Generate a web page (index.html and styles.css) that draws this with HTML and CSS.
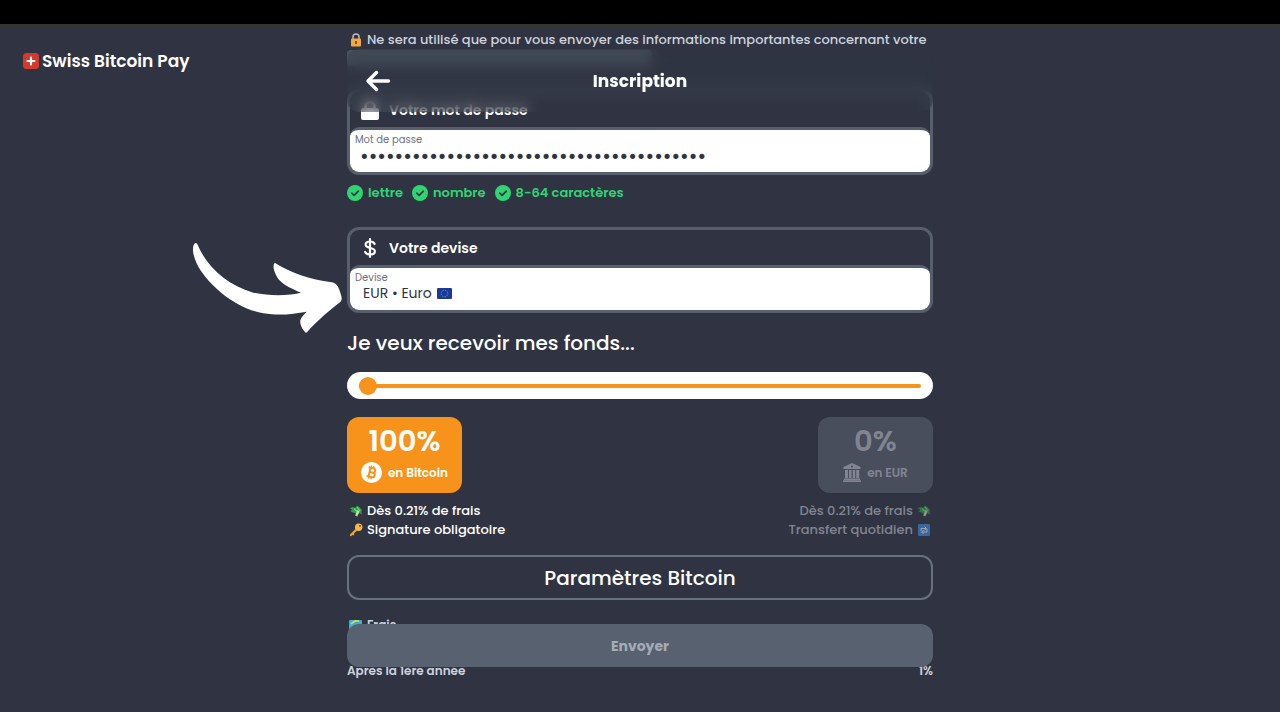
FILE: index.html
```html
<!DOCTYPE html>
<html lang="fr">
<head>
<meta charset="utf-8">
<meta name="viewport" content="width=device-width, initial-scale=1">
<title>Swiss Bitcoin Pay – Inscription</title>
<link rel="stylesheet" href="styles.css">
</head>
<body>
<svg class="defs" aria-hidden="true">
  <symbol id="check" viewBox="0 0 16 16"><circle cx="8" cy="8" r="8" fill="#2fd573"/><path d="M4.8 8.1l2.3 2.3 4.2-4.3" fill="none" stroke="#303542" stroke-width="1.7" stroke-linecap="round" stroke-linejoin="round"/></symbol>
  <symbol id="money" viewBox="0 0 14 14"><path d="M.5 4L4 3l2 1L8 1.500l2.500 1.800L13 6l-.8 2 1 2.500-3-1.500L8.500 11 5.500 9 1.500 7.500 3 5.800z" fill="#2fa04c"/><path d="M5 4.500l4 4M8 3l3 4" stroke="#85d36b" stroke-width="1.100"/><path d="M8.500 6l2 1.500-2.300 5-2-1z" fill="#cfdab5"/></symbol>
</svg>
<div class="strip"></div>
<div class="page">
  <a class="brand" href="#">
    <svg width="16" height="16" viewBox="0 0 16 16" aria-hidden="true"><rect width="16" height="16" rx="3.500" fill="#d5392d"/><path d="M8 4.500v7M4.500 8h7" stroke="#fff" stroke-width="2.200" stroke-linecap="round"/></svg>
    <span>Swiss Bitcoin Pay</span>
  </a>
  <main class="column">
    <header class="topbar">
      <button class="back" type="button" aria-label="Retour"><svg width="26" height="22" viewBox="0 0 26 22" fill="none" stroke="#fff" stroke-width="3.400" stroke-linecap="round" stroke-linejoin="round"><path d="M11.500 2.500L3 11l8.500 8.500M3 11h20.500"/></svg></button>
      <h1>Inscription</h1>
    </header>
    <p class="note pale">
      <svg width="14" height="14" viewBox="0 0 14 14" aria-hidden="true"><path d="M4 7V4a3 3 0 0 1 6 0v3" fill="none" stroke="#b8bcc5" stroke-width="1.500"/><rect x="2" y="5.500" width="10" height="8" rx="1" fill="#f5a63d"/><path d="M7 8v3" stroke="#66482a" stroke-width="1.700"/></svg>
      <span>Ne sera utilisé que pour vous envoyer des informations importantes concernant votre</span>
    </p>
    <div class="faded-line"></div>

    <section class="field password">
      <label class="field-title" for="pw">
        <svg width="20" height="20" viewBox="0 0 20 20" aria-hidden="true"><path d="M5.500 10V6.500a4.500 4.500 0 0 1 9 0V10" fill="none" stroke="#fff" stroke-width="2.500"/><rect x="1" y="8" width="18" height="12" rx="2" fill="#fff"/></svg>
        <span>Votre mot de passe</span>
      </label>
      <div class="control">
        <span class="hint">Mot de passe</span>
        <input id="pw" class="secret" type="password" value="aaaaaaaaaaaaaaaaaaaaaaaaaaaaaaaaaaaaaaaa">
      </div>
    </section>
    <ul class="rules">
      <li><svg width="16" height="16" aria-hidden="true"><use href="#check"/></svg>lettre</li>
      <li><svg width="16" height="16" aria-hidden="true"><use href="#check"/></svg>nombre</li>
      <li><svg width="16" height="16" aria-hidden="true"><use href="#check"/></svg>8-64 caractères</li>
    </ul>

    <section class="field currency">
      <label class="field-title" for="cur">
        <svg width="20" height="20" viewBox="0 0 20 20" fill="none" stroke="#fff" stroke-width="2.200" stroke-linecap="round" aria-hidden="true"><path d="M10 1.200v17.600M14.600 6c-.8-1.800-2.400-2.500-4.600-2.500-2.700 0-4.400 1.200-4.400 3.100 0 4.500 9.300 2.200 9.300 6.700 0 2-2 3.200-4.700 3.200-2.500 0-4.300-.8-5.100-2.600"/></svg>
        <span>Votre devise</span>
      </label>
      <div class="control">
        <span class="hint">Devise</span>
        <div class="choice">
          <select id="cur"><option>EUR • Euro</option></select>
          <svg width="15" height="11" viewBox="0 0 15 11" aria-hidden="true"><rect width="15" height="11" rx="1" fill="#173a9b"/><circle cx="7.500" cy="5.500" r="3.300" fill="none" stroke="#b5ad66" stroke-width=".9" stroke-dasharray=".8 .93"/></svg>
        </div>
      </div>
      <svg class="pointer" width="180" height="110" viewBox="0 0 540 330" aria-hidden="true"><path fill="#fff" d="M40 48C43 37 49 36 53 44C80 110 140 165 220 188C270 199 330 197 363 188C330 174 298 160 288 135C280 118 278 106 284 98C330 128 390 148 455 157C468 158 475 170 480 185C486 202 487 210 481 216C450 240 415 268 381 307Q376 311 373 304C361 288 356 272 366 261Q372 252 380 245C340 252 300 258 250 250C170 236 90 170 55 110C40 82 37 60 40 48Z"/></svg>
    </section>

    <h2><label for="share">Je veux recevoir mes fonds...</label></h2>
    <input id="share" class="slider" type="range" min="0" max="100" value="0">

    <div class="split">
      <div class="side">
        <div class="card bitcoin">
          <strong>100%</strong>
          <span class="card-label"><svg width="21" height="21" viewBox="0 0 21 21" aria-hidden="true"><circle cx="10.500" cy="10.500" r="10.500" fill="#fff"/><g transform="rotate(13 10.500 10.500)" fill="none" stroke="#f7931a" stroke-width="2"><path d="M6.500 6h5a2.200 2.200 0 0 1 0 4.400H8.500M8.500 10.400h3.500a2.300 2.300 0 0 1 0 4.600H6.500M8.500 6v9"/><path d="M9 3.800V6M11.500 3.800V6M9 15v2.200M11.500 15v2.200" stroke-width="1.400"/></g></svg>en Bitcoin</span>
        </div>
        <p class="note"><svg width="14" height="14" aria-hidden="true"><use href="#money"/></svg><span>Dès 0.21% de frais</span></p>
        <p class="note"><svg width="14" height="14" viewBox="0 0 14 14" aria-hidden="true"><path d="M8.500 5.500L2 12" stroke="#e8a13c" stroke-width="2.300" stroke-linecap="round"/><path d="M3.500 10.500l1.500 1.500" stroke="#e8a13c" stroke-width="1.500"/><circle cx="9.700" cy="4.300" r="3.700" fill="#f6b84b"/><circle cx="11" cy="3" r="1" fill="#6a513a"/></svg><span>Signature obligatoire</span></p>
      </div>
      <div class="side right">
        <div class="card bank">
          <strong>0%</strong>
          <span class="card-label"><svg width="18" height="19" viewBox="0 0 18 19" fill="currentColor" aria-hidden="true"><path d="M9 0l8.500 4v2H.5V4zM2 7h3v8H2zM6 7h2.500v8H6zM9.700 7h2.500v8H9.700zM13.200 7h3v8h-3zM1 15.500h16V17H1zM0 17.300h18V19H0z"/><circle cx="9" cy="3.600" r="1.100" fill="#484e5c"/></svg>en EUR</span>
        </div>
        <p class="note"><span>Dès 0.21% de frais</span><svg width="14" height="14" aria-hidden="true"><use href="#money"/></svg></p>
        <p class="note"><span>Transfert quotidien</span><svg width="14" height="14" viewBox="0 0 14 14" aria-hidden="true"><rect x="1" y="1" width="12" height="12" rx="1" fill="#438bd9"/><path d="M4 8V5.500h5M10 6v3H5M7.500 3.500l2 2-2 1.500M6.500 7.500l-2 1.500 2 2" fill="none" stroke="#e5f2ff"/></svg></p>
      </div>
    </div>

    <button class="settings" type="button">Paramètres Bitcoin</button>

    <section class="fees">
      <p class="note"><svg width="14" height="14" viewBox="0 0 14 14" aria-hidden="true"><rect y="2" width="13" height="10" rx="1" fill="#39afd1"/><path d="M2 6l4-3h4" fill="none" stroke="#c8d465" stroke-width="2"/></svg><span>Frais</span></p>
      <dl><dt>Après la 1ère année</dt><dd>1%</dd></dl>
    </section>
    <button class="submit" type="submit" disabled>Envoyer</button>
  </main>
</div>
</body>
</html>
```
FILE: styles.css
```css
* { box-sizing: border-box; }
body {
  margin: 0;
  height: 100vh;
  overflow: hidden;
  display: flex;
  flex-direction: column;
  background: #303442;
  color: #fff;
  font-family: Poppins, Inter, "Noto Sans", sans-serif;
  font-size: 13px;
  font-weight: 600;
  line-height: 20px;
}
h1, h2, p, ul, dl, dd { margin: 0; padding: 0; }
button, input, select { font: inherit; margin: 0; }
svg { flex: none; display: block; }
.defs { position: absolute; width: 0; height: 0; }
.strip { flex: none; height: 24px; background: #000; }
.page {
  flex: 1;
  min-height: 0;
  display: grid;
  grid-template-columns: 1fr minmax(0, 586px) 1fr;
  border-top: 4px solid #33352f;
}
.brand {
  display: flex;
  align-items: center;
  align-self: start;
  gap: 3px;
  padding: 21px 0 0 23px;
  color: #fff;
  font-size: 17px;
  line-height: 24px;
  text-decoration: none;
  white-space: nowrap;
}
.column { position: relative; padding-top: 2px; min-width: 0; }
.topbar {
  position: absolute;
  z-index: 2;
  top: 21px;
  left: 0;
  right: 0;
  height: 63px;
  display: grid;
  grid-template-columns: 44px 1fr 44px;
  align-items: center;
  padding: 0 18px;
  border-radius: 12px;
  background: rgba(48, 54, 67, 0.3);
  backdrop-filter: blur(7px);
}
.back { width: 26px; padding: 0; border: 0; background: none; cursor: pointer; }
h1 { font-size: 17px; font-weight: 700; line-height: 24px; text-align: center; }
.note { display: flex; align-items: center; gap: 4px; padding: 0 2px; line-height: 19px; white-space: nowrap; }
.pale { color: #ccd1dc; line-height: 20px; font-weight: 500; }
.faded-line { width: 52%; height: 16px; background: #4b5361; border-radius: 4px; }
.field { position: relative; border: 3px solid #575e6c; border-radius: 12px; }
.password { margin-top: 23px; }
.currency { margin-top: 24px; }
.field-title { display: flex; align-items: center; gap: 9px; height: 35px; padding: 0 10px; font-size: 14px; }
.control {
  height: 45px;
  border-top: 3px solid #575e6c;
  border-radius: 9px;
  background: #fff;
  color: #303442;
  padding: 3px 5px 0;
}
.hint { display: block; font-size: 10px; line-height: 14px; font-weight: 400; color: #6c717e; }
.secret {
  display: block;
  width: 100%;
  height: 18px;
  padding: 0 5px;
  border: 0;
  background: none;
  color: #303442;
  font-size: 21px;
  font-weight: 400;
  outline: 0;
}
.choice { display: flex; align-items: center; gap: 5px; padding: 0 8px; }
.choice select {
  appearance: none;
  field-sizing: content;
  height: 16px;
  border: 0;
  padding: 0;
  background: none;
  color: #303442;
  font-size: 14px;
  line-height: 16px;
  font-weight: 400;
}
.rules { display: flex; gap: 9px; margin-top: 8px; list-style: none; color: #2fd573; }
.rules li { display: flex; align-items: center; gap: 5px; }
.pointer { position: absolute; top: 0; right: calc(100% - 10px); pointer-events: none; }
h2 { margin-top: 15px; font-size: 20px; line-height: 30px; font-weight: 500; }
.slider {
  appearance: none;
  display: block;
  width: 100%;
  height: 27px;
  margin-top: 14px;
  padding: 0 12px;
  border-radius: 14px;
  background: #fff;
}
.slider::-webkit-slider-runnable-track { height: 4px; border-radius: 2px; background: #f7931a; }
.slider::-webkit-slider-thumb {
  appearance: none;
  width: 18px;
  height: 18px;
  margin-top: -7px;
  border-radius: 50%;
  background: #f7931a;
}
.split { display: flex; justify-content: space-between; margin-top: 18px; }
.side { display: flex; flex-direction: column; align-items: flex-start; }
.card {
  display: flex;
  flex-direction: column;
  align-items: center;
  gap: 5px;
  min-width: 115px;
  height: 76px;
  margin-bottom: 8px;
  padding: 8px 12px;
  border-radius: 12px;
}
.card strong { font-size: 29px; line-height: 32px; font-weight: 600; }
.card-label { display: flex; align-items: center; gap: 6px; font-size: 12px; line-height: 21px; white-space: nowrap; }
.bitcoin { background: #f7931a; }
.right { align-items: flex-end; color: #818591; }
.right .note svg { opacity: 0.6; }
.bank { background: #484e5c; }
.side .note { font-weight: 500; }
.settings {
  display: block;
  width: 100%;
  height: 45px;
  margin-top: 16px;
  border: 2px solid #697080;
  border-radius: 12px;
  background: none;
  color: #fff;
  font-size: 20px;
  font-weight: 500;
}
.fees { margin-top: 15px; color: #ccd1dc; font-size: 12px; }
.fees dl { display: flex; justify-content: space-between; margin-top: 27px; }
.submit {
  position: absolute;
  left: 0;
  bottom: 45px;
  width: 100%;
  height: 43px;
  border: 0;
  border-radius: 12px;
  background: #58616f;
  color: #a5abb7;
  font-size: 14px;
  font-weight: 700;
}
```
